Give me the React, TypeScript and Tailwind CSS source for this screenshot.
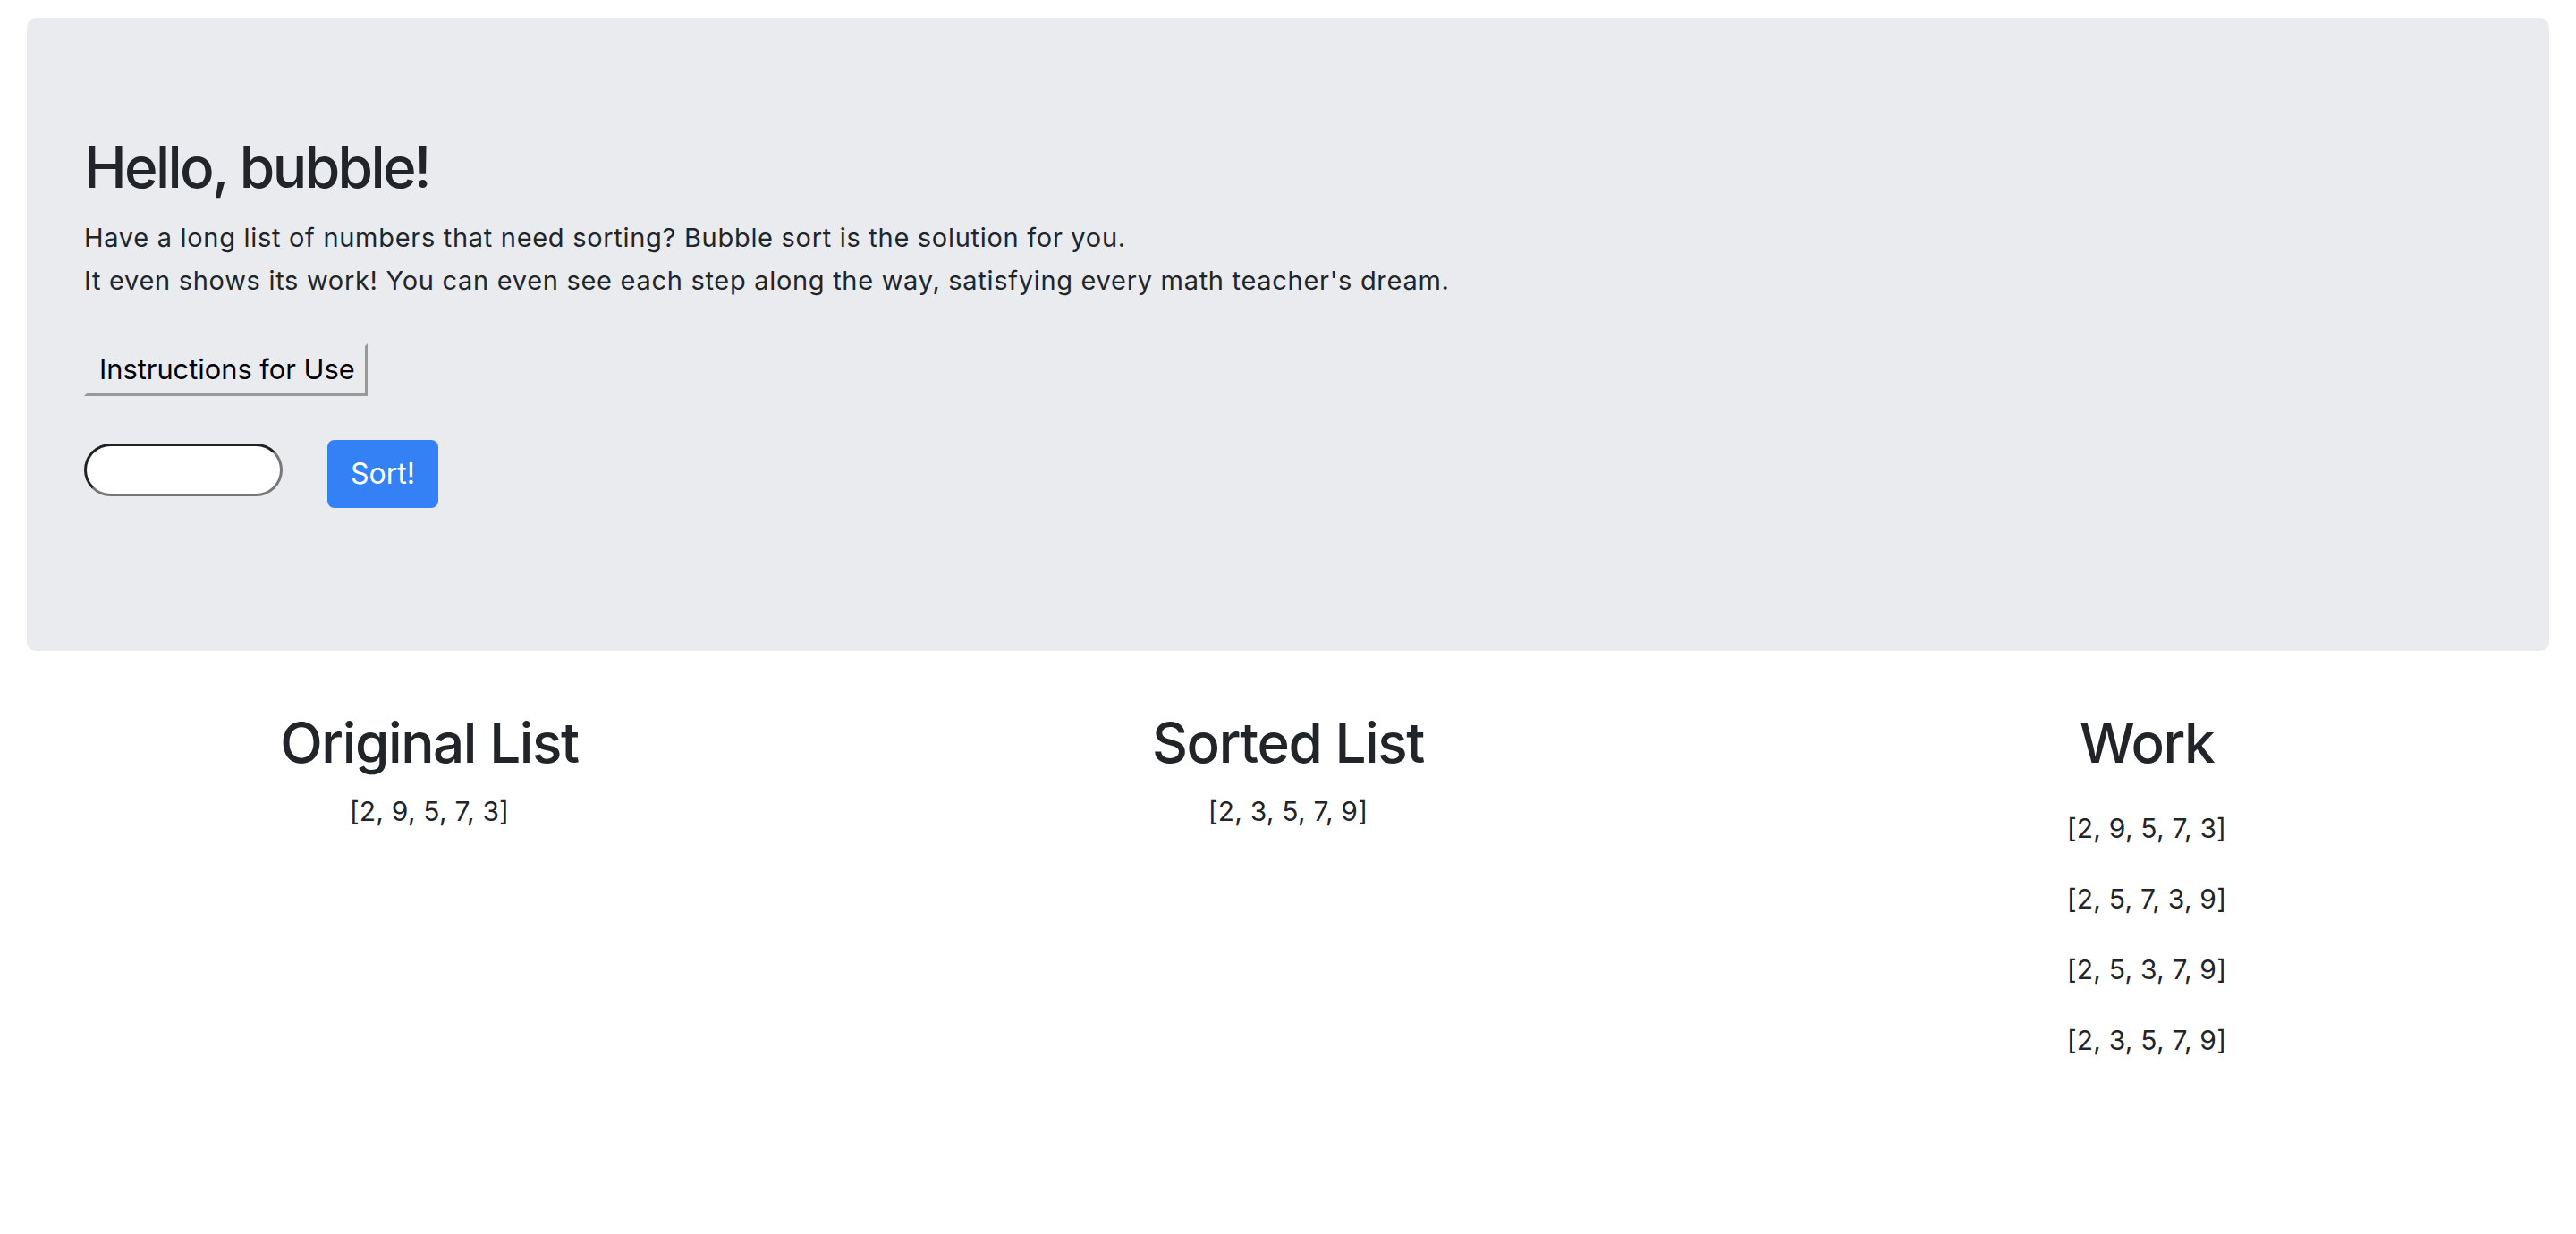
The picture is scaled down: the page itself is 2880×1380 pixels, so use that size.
export default function App() {
  const work = ["[2, 9, 5, 7, 3]", "[2, 5, 7, 3, 9]", "[2, 5, 3, 7, 9]", "[2, 3, 5, 7, 9]"];

  return (
    <div className="min-h-screen bg-white text-[#212529] font-['Inter','Liberation_Sans',sans-serif]">
      <div className="px-[30px] pt-[20px]">
        <div className="rounded-[10px] bg-[#e9ebef] px-[64px] pt-[129px] pb-[160px]">
          <h1 className="text-[64px] leading-[1.2] font-medium tracking-[-2.6px]">Hello, bubble!</h1>
          <p className="mt-[16px] text-[29px] leading-[48px] tracking-[0.7px]">
            Have a long list of numbers that need sorting? Bubble sort is the solution for you.
            <br />
            It even shows its work! You can even see each step along the way, satisfying every math teacher's dream.
          </p>
          <button className="mt-[46px] block h-[59px] border-[3px] border-t-[#e9ebef] border-l-[#e9ebef] border-r-[#999999] border-b-[#999999] pl-[14px] pr-[11px] text-[30.8px] text-black">
            Instructions for Use
          </button>
          <div className="mt-[49px] flex items-start gap-[50px]">
            <input
              type="text"
              className="mt-[4px] h-[59px] w-[222px] rounded-full border-[3px] border-t-[#222222] border-l-[#222222] border-r-[#777777] border-b-[#777777] bg-white px-4 outline-none"
            />
            <button className="h-[76px] w-[124px] rounded-[8px] bg-[#3381f5] text-[32px] text-white">Sort!</button>
          </div>
        </div>
      </div>

      <div className="mt-[66px] grid grid-cols-3">
        <div className="flex flex-col items-center">
          <h2 className="text-[62px] leading-[1.2] font-medium tracking-[-1.4px]">Original List</h2>
          <p className="mt-[15px] text-[30px] leading-[48px] tracking-[0.2px]">[2, 9, 5, 7, 3]</p>
        </div>
        <div className="flex flex-col items-center">
          <h2 className="text-[62px] leading-[1.2] font-medium tracking-[-1.4px]">Sorted List</h2>
          <p className="mt-[15px] text-[30px] leading-[48px] tracking-[0.2px]">[2, 3, 5, 7, 9]</p>
        </div>
        <div className="flex flex-col items-center">
          <h2 className="text-[62px] leading-[1.2] font-medium tracking-[-1.4px]">Work</h2>
          <div className="mt-[34px] flex flex-col items-center gap-[31px]">
            {work.map((row, i) => (
              <p key={i} className="text-[30px] leading-[48px] tracking-[0.2px]">
                {row}
              </p>
            ))}
          </div>
        </div>
      </div>
    </div>
  );
}
